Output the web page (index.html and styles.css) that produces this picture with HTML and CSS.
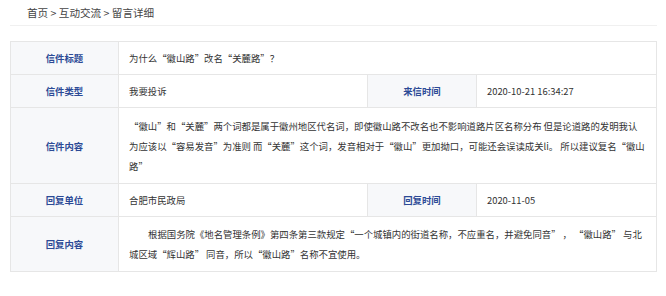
FILE: index.html
```html
<!DOCTYPE html>
<html lang="zh-CN">
<head>
    <meta charset="UTF-8">
    <meta name="viewport" content="width=device-width, initial-scale=1.0">
    <title>留言详细</title>
    <link rel="stylesheet" href="styles.css">
</head>
<body>
    <div class="crumbs">首页 &gt; 互动交流 &gt; 留言详细</div>

    <table class="letter">
        <colgroup>
            <col class="col-label">
            <col class="col-value">
            <col class="col-label2">
            <col>
        </colgroup>
        <tr class="row-single">
            <th>信件标题</th>
            <td colspan="3">为什么“徽山路”改名“关麓路”？</td>
        </tr>
        <tr class="row-single">
            <th>信件类型</th>
            <td>我要投诉</td>
            <th>来信时间</th>
            <td>2020-10-21 16:34:27</td>
        </tr>
        <tr class="row-content">
            <th>信件内容</th>
            <td colspan="3">“徽山”和“关麓”两个词都是属于徽州地区代名词，即使徽山路不改名也不影响道路片区名称分布 但是论道路的发明我认为应该以“容易发音”为准则 而“关麓”这个词，发音相对于“徽山”更加拗口，可能还会误读成关li。 所以建议复名“徽山路”</td>
        </tr>
        <tr class="row-single">
            <th>回复单位</th>
            <td>合肥市民政局</td>
            <th>回复时间</th>
            <td>2020-11-05</td>
        </tr>
        <tr class="row-reply">
            <th>回复内容</th>
            <td colspan="3" class="indent">根据国务院《地名管理条例》第四条第三款规定“一个城镇内的街道名称，不应重名，并避免同音” ， “徽山路” 与北城区域“辉山路” 同音，所以“徽山路”名称不宜使用。</td>
        </tr>
    </table>
</body>
</html>
```

FILE: styles.css
```css
body {
    margin: 0;
    background: #fff;
    font-family: "Noto Sans CJK SC", "Liberation Sans", sans-serif;
    font-size: 9.4px;
    color: #333;
}

.crumbs {
    margin: 0 9px 0 10px;
    padding: 7px 0 0 17px;
    height: 18px;
    line-height: 12px;
    font-size: 10.6px;
    color: #444;
    border-bottom: 1px solid #f0f0f0;
}

.letter {
    margin: 15px 0 0 10px;
    width: 647px;
    border-collapse: collapse;
    table-layout: fixed;
}

.col-label {
    width: 108px;
}

.col-value {
    width: 249px;
}

.col-label2 {
    width: 109px;
}

.letter th,
.letter td {
    border: 1px solid #e6e6e6;
    vertical-align: middle;
    line-height: 20px;
}

.letter th {
    background: #f7f8fa;
    color: #2c4a96;
    font-weight: bold;
    text-align: center;
}

.letter td {
    padding: 0 10px;
    text-align: left;
}

.row-single {
    height: 33px;
}

.row-content {
    height: 76px;
}

.row-reply {
    height: 55px;
}

.indent {
    text-indent: 19px;
}
```
